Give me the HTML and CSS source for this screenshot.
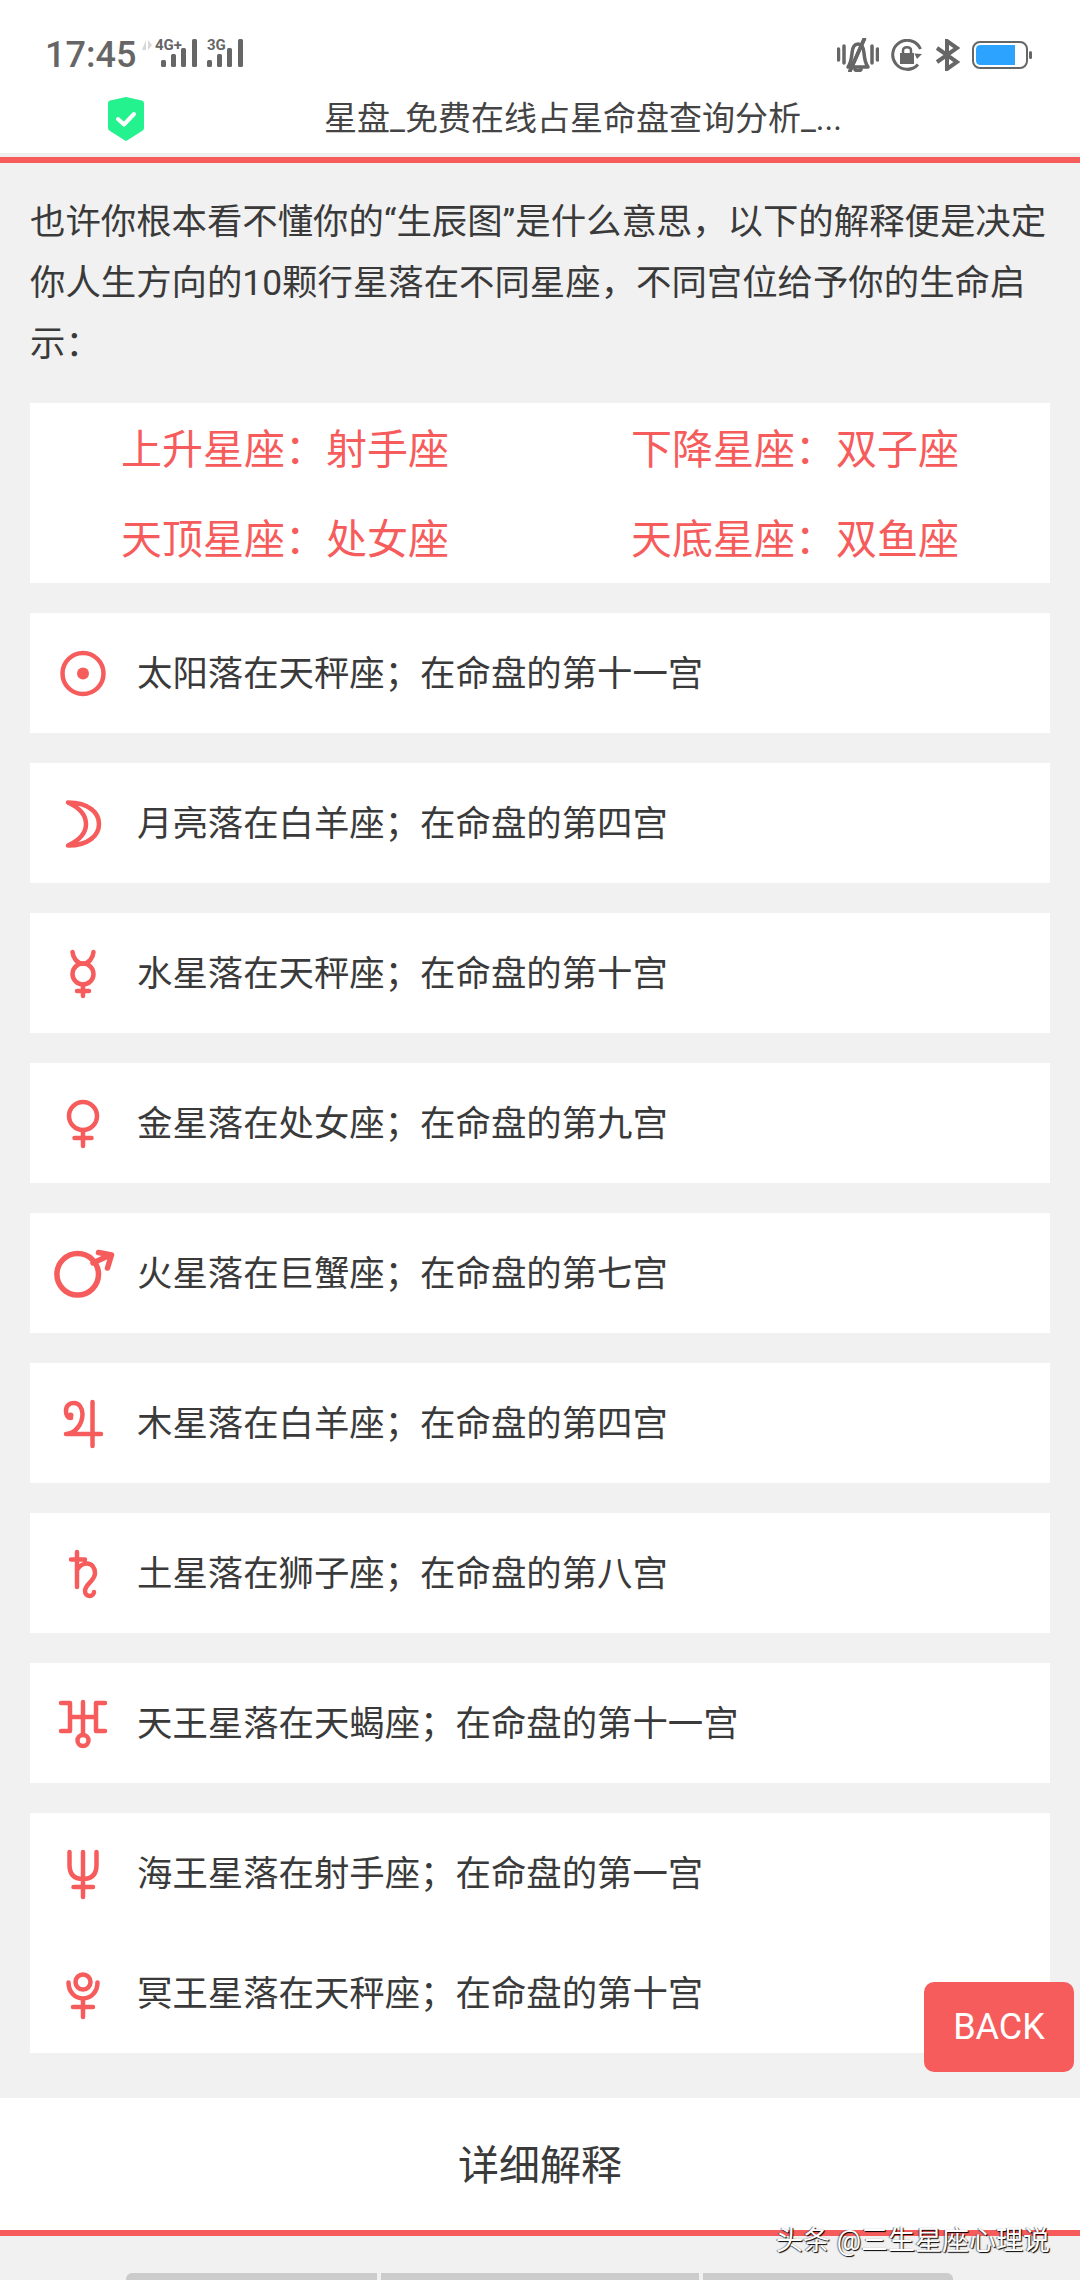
FILE: index.html
```html
<!DOCTYPE html>
<html lang="zh-CN">
<head>
    <meta charset="UTF-8">
    <title>星盘</title>
    <link rel="stylesheet" href="styles.css">
</head>
<body>
<div class="phone">
    <header class="top">
        <div class="status">
            <span class="time">17:45</span>
            <svg class="signal" width="110" height="38" viewBox="0 -4 110 38">
                <path class="updown" d="M5 2V12L1 12ZM7 2V12L11 7Z"/>
                <text class="net" x="14" y="12">4G+</text>
                <rect class="bar" x="20" y="22" width="5" height="7" rx="1.5"/>
                <rect class="bar" x="30" y="16" width="5" height="13" rx="1.5"/>
                <rect class="bar" x="40" y="10" width="5" height="19" rx="1.5"/>
                <rect class="bar" x="51" y="1" width="5" height="28" rx="1.5"/>
                <text class="net" x="66" y="12">3G</text>
                <rect class="bar" x="66" y="22" width="5" height="7" rx="1.5"/>
                <rect class="bar" x="76" y="16" width="5" height="13" rx="1.5"/>
                <rect class="bar" x="86" y="10" width="5" height="19" rx="1.5"/>
                <rect class="bar" x="97" y="1" width="5" height="28" rx="1.5"/>
            </svg>
            <div class="status-right">
                <svg width="42" height="34" viewBox="0 0 42 34" class="st-line">
                    <path d="M1.5 11V22M7 8V25M35 8V25M40.5 11V22"/>
                    <path d="M11 29H31C28 25 27.5 21 27 15C26.5 9 24 6 21 6C18 6 15.5 9 15 15C14.5 21 14 25 11 29Z"/>
                    <path d="M18 31.5C19 33 23 33 24 31.5"/>
                    <path d="M27 1L13 33" stroke="#fff" stroke-width="5"/>
                    <path d="M27.5 1L13 33"/>
                </svg>
                <svg width="32" height="32" viewBox="0 0 32 32" class="st-lock">
                    <path class="ring" d="M27 25.500A14.500 14.500 0 1 1 29.500 10"/>
                    <path class="ring" d="M16 30.500A14.500 14.500 0 0 0 22 29"/>
                    <path class="fill" d="M31 15L26 20L23.500 14.500Z"/>
                    <path class="ring thin" d="M12 14V11.500C12 7 20 7 20 11.500V14"/>
                    <rect class="fill" x="9" y="14" width="14" height="11"/>
                </svg>
                <svg width="25" height="32" viewBox="0 0 25 32" class="st-bt">
                    <path d="M2 9L22 23L12 30V2L22 9L2 23"/>
                </svg>
                <svg width="60" height="28" viewBox="0 0 60 28" class="st-bat">
                    <rect class="shell" x="1" y="1" width="54" height="26" rx="7"/>
                    <path class="level" d="M8 4H43V24H8A4.500 4.500 0 0 1 4 19.500V8.500A4.500 4.500 0 0 1 8 4Z"/>
                    <rect class="nub" x="57" y="10" width="3" height="8" rx="1.500"/>
                </svg>
            </div>
        </div>
        <div class="titlebar">
            <svg class="shield" width="36" height="44" viewBox="0 0 36 44">
                <path d="M18 0L34 3.500Q36 4 36 6V31Q36 33 34 34L19 43.500Q18 44 17 43.500L2 34Q0 33 0 31V6Q0 4 2 3.500Z"/>
                <path class="tick" d="M10 22L16 27.500L26 17"/>
            </svg>
            <span class="page-title">星盘_免费在线占星命盘查询分析_...</span>
        </div>
    </header>

    <main class="content">
        <p class="intro">也许你根本看不懂你的“生辰图”是什么意思，以下的解释便是决定你人生方向的10颗行星落在不同星座，不同宫位给予你的生命启示：</p>

        <div class="angles">
            <div>上升星座：射手座</div>
            <div>下降星座：双子座</div>
            <div>天顶星座：处女座</div>
            <div>天底星座：双鱼座</div>
        </div>

        <div class="planet">
            <svg class="sym" viewBox="0 0 60 60"><circle cx="30" cy="30.500" r="20.500"/><circle class="dot" cx="30" cy="30.500" r="6"/></svg>
            <span>太阳落在天秤座；在命盘的第十一宫</span>
        </div>
        <div class="planet">
            <svg class="sym" viewBox="0 0 60 60"><path d="M15 9.500C36 9.500 46 20 46 31C46 42 36 52.500 15 52.500C27 47 33 40 33 31C33 22 27 15 15 9.500Z"/></svg>
            <span>月亮落在白羊座；在命盘的第四宫</span>
        </div>
        <div class="planet">
            <svg class="sym" viewBox="0 0 60 60"><circle cx="30" cy="31" r="10.500"/><path d="M19.500 9C20 15 24 20.500 30 20.500C36 20.500 40 15 40.500 9M30 42V53M24 48H36"/></svg>
            <span>水星落在天秤座；在命盘的第十宫</span>
        </div>
        <div class="planet">
            <svg class="sym" viewBox="0 0 60 60"><circle cx="30" cy="23" r="14"/><path d="M30 37V53M21.500 45H38.500"/></svg>
            <span>金星落在处女座；在命盘的第九宫</span>
        </div>
        <div class="planet">
            <svg class="sym thick" viewBox="0 0 60 60"><circle cx="24.700" cy="31.300" r="20.800"/><path d="M40 20L57 12M45.500 9.500L58.500 12L54.500 25"/></svg>
            <span>火星落在巨蟹座；在命盘的第七宫</span>
        </div>
        <div class="planet">
            <svg class="sym" viewBox="0 0 60 60"><path d="M18 25C14 25 13 21 13 18C13 12 17 10 21 10C26 10 29.500 15 29.500 21C29.500 31 22 41 13 41H48M39.500 9V53"/><circle class="dot" cx="17.500" cy="22.500" r="3"/></svg>
            <span>木星落在白羊座；在命盘的第四宫</span>
        </div>
        <div class="planet">
            <svg class="sym" viewBox="0 0 60 60"><path d="M24 9V44M18 16.500H32M24 27C27 22 30 20.500 34 20.500C39 20.500 42 25 42 30C42 38 32 41 32 48C32 51 34 53 37 53C39 53 41 51 41 49"/></svg>
            <span>土星落在狮子座；在命盘的第八宫</span>
        </div>
        <div class="planet">
            <svg class="sym" viewBox="0 0 60 60"><path d="M8 10H17V38H8M52 10H43V38H52M17 24H43M30 9V42"/><circle cx="30" cy="47.500" r="5.500"/></svg>
            <span>天王星落在天蝎座；在命盘的第十一宫</span>
        </div>
        <div class="planet-pair">
            <div class="planet">
                <svg class="sym" viewBox="0 0 60 60"><path d="M16.500 9V22C16.500 32 22 36 30 36C38 36 43.500 32 43.500 22V9M30 9V54M20.500 44H40"/></svg>
                <span>海王星落在射手座；在命盘的第一宫</span>
            </div>
            <div class="planet">
                <svg class="sym" viewBox="0 0 60 60"><circle cx="30" cy="19" r="7.500"/><path d="M15.500 19.500C15.500 29 22 35.500 30 35.500C38 35.500 44.500 29 44.500 19.500M30 35.500V54M20 44H40"/></svg>
                <span>冥王星落在天秤座；在命盘的第十宫</span>
            </div>
        </div>
    </main>

    <div class="more"><span>详细解释</span></div>

    <div class="scrollbars">
        <i class="seg-a"></i>
        <i class="seg-b"></i>
        <i class="seg-c"></i>
    </div>

    <button class="back">BACK</button>
    <div class="watermark">头条 @三生星座心理说</div>
</div>
</body>
</html>
```

FILE: styles.css
```css
* {
    box-sizing: border-box;
}

body {
    margin: 0;
    background: #f1f1f1;
    font-family: Roboto, "Noto Sans CJK SC", sans-serif;
    color: #3a3a3a;
}

.phone {
    position: relative;
    width: 1080px;
    height: 2280px;
    overflow: hidden;
    background: #f1f1f1;
}

/* top bars */
.top {
    background: #fff;
    border-bottom: 6px solid #f65c5c;
    height: 163px;
    box-shadow: inset 0 -4px 0 #eeeeee;
}

.status {
    height: 84px;
    padding: 26px 0 0 45px;
    display: flex;
    align-items: center;
    color: #666;
}

.time {
    font-size: 36px;
    font-weight: 500;
    width: 96px;
}

.signal {
    display: block;
    margin-top: -5px;
}

.updown {
    fill: #d8d8d8;
}

.net {
    font-family: Roboto, sans-serif;
    font-size: 15px;
    font-weight: 700;
    fill: #666;
}

.bar {
    fill: #666;
}

.status-right {
    margin-left: auto;
    margin-right: 48px;
    display: flex;
    align-items: center;
    gap: 12px;
}

.status-right svg {
    display: block;
}

.st-line path {
    fill: none;
    stroke: #666;
    stroke-width: 3.500;
    stroke-linecap: round;
    stroke-linejoin: round;
}

.st-lock .ring {
    fill: none;
    stroke: #666;
    stroke-width: 3;
}

.st-lock .thin {
    stroke-width: 2.500;
}

.st-lock .fill {
    fill: #666;
}

.st-bt path {
    fill: none;
    stroke: #666;
    stroke-width: 4;
}

.shell {
    fill: none;
    stroke: #666;
    stroke-width: 2;
}

.level {
    fill: #2ba3ff;
}

.nub {
    fill: #666;
}

.titlebar {
    height: 69px;
    display: flex;
    align-items: center;
    padding-left: 108px;
}

.shield {
    display: block;
    fill: #24f28f;
}

.shield .tick {
    fill: none;
    stroke: #fff;
    stroke-width: 4;
    stroke-linecap: round;
    stroke-linejoin: round;
}

.page-title {
    margin: 0 0 6px 180px;
    font-size: 33px;
    color: #444;
    white-space: nowrap;
}

/* body */
.content {
    padding: 29px 30px 0;
}

.intro {
    margin: 0 0 28px;
    font-size: 35.400px;
    line-height: 61px;
}

.angles {
    background: #fff;
    display: grid;
    grid-template-columns: 1fr 1fr;
    grid-auto-rows: 90px;
    margin-bottom: 30px;
    font-size: 41px;
    color: #f65c5c;
}

.angles div {
    display: flex;
    align-items: center;
    justify-content: center;
    padding-bottom: 5px;
}

.planet {
    height: 120px;
    background: #fff;
    display: flex;
    align-items: center;
    gap: 24px;
    padding-left: 23px;
    margin-bottom: 30px;
    font-size: 35.400px;
}

.planet span {
    margin-bottom: 6px;
}

.planet-pair .planet {
    margin-bottom: 0;
}

.sym {
    display: block;
    width: 60px;
    height: 60px;
    flex: none;
    overflow: visible;
    fill: none;
    stroke: #f65c5c;
    stroke-width: 4.500;
    stroke-linecap: round;
    stroke-linejoin: round;
}

.sym .dot {
    fill: #f65c5c;
    stroke: none;
}

.sym.thick {
    stroke-width: 5.500;
}

.planet-pair {
    margin-bottom: 45px;
}

/* bottom */
.more {
    height: 138px;
    background: #fff;
    border-bottom: 6px solid #f65c5c;
    display: flex;
    align-items: center;
    justify-content: center;
    font-size: 41px;
}

.more span {
    margin-bottom: 5px;
}

.scrollbars {
    display: flex;
    margin-top: 37px;
    padding-left: 126px;
}

.scrollbars i {
    display: block;
    height: 8px;
    background: #ccc;
    margin-right: 4px;
}

.seg-a {
    width: 251px;
    border-radius: 6px 0 0 0;
}

.seg-b {
    width: 318px;
}

.seg-c {
    width: 250px;
    border-radius: 0 6px 0 0;
}

.back {
    position: absolute;
    left: 924px;
    top: 1982px;
    width: 150px;
    height: 90px;
    border: 0;
    border-radius: 10px;
    background: #f65c5c;
    color: #fff;
    font-family: Roboto, sans-serif;
    font-size: 36px;
}

.watermark {
    position: absolute;
    left: 776px;
    top: 2221px;
    font-size: 27px;
    line-height: 40px;
    color: #fff;
    white-space: nowrap;
    text-shadow: 1px 1px 1px #000, -1px 0 1px rgba(0, 0, 0, .5);
}
```
